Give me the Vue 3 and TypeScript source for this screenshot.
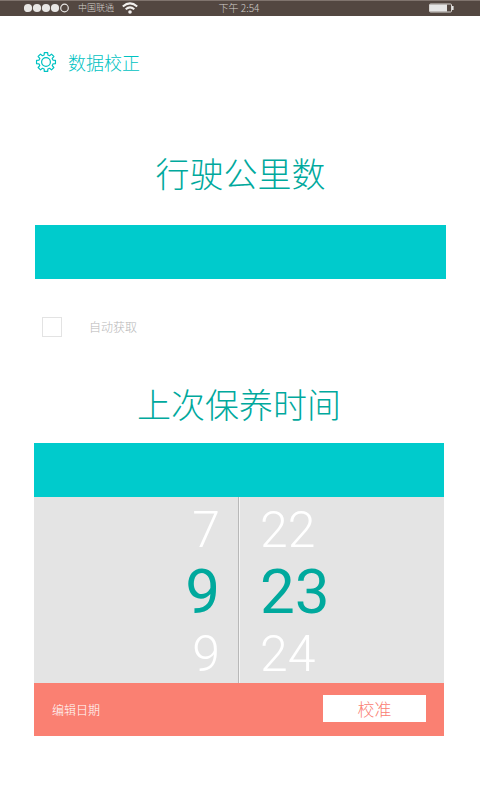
<script setup lang="ts">
import { ref } from 'vue'

interface PickerColumn {
  name: string
  side: 'left' | 'right'
  values: number[]
}

const mileage = ref<string>('')
const autoFetch = ref<boolean>(false)

const columns: PickerColumn[] = [
  { name: 'month', side: 'left', values: [7, 9, 9] },
  { name: 'day', side: 'right', values: [22, 23, 24] },
]
const activeRow = ref<Record<string, number>>({ month: 1, day: 1 })

function pick(column: PickerColumn, row: number): void {
  activeRow.value[column.name] = row
}

const teeth: number[] = [0, 45, 90, 135, 180, 225, 270, 315]
function gearPath(): string {
  const point = (radius: number, degrees: number): string => {
    const a = (degrees * Math.PI) / 180
    return `${(11 + radius * Math.cos(a)).toFixed(2)} ${(11 + radius * Math.sin(a)).toFixed(2)}`
  }
  return (
    teeth
      .map((t, i) => `${i ? 'L' : 'M'}${point(7.2, t - 15)}L${point(9.6, t - 10)}L${point(9.6, t + 10)}L${point(7.2, t + 15)}`)
      .join('') + 'Z'
  )
}
</script>

<template>
  <div class="screen">
    <div class="status">
      <div class="carrier">
        <svg width="46" height="10" viewBox="0 0 46 10" aria-hidden="true">
          <circle v-for="n in 4" :key="n" :cx="n * 9 - 5" cy="5" r="4.1" fill="#e8e6e4" />
          <circle cx="40.5" cy="5" r="3.8" fill="none" stroke="#e8e6e4" stroke-width="1.2" />
        </svg>
        <span class="operator">中国联通</span>
        <svg width="16" height="12" viewBox="0 0 16 12" aria-hidden="true" fill="none" stroke="#f2f0ee" stroke-width="2">
          <path d="M0.8 4.6Q8 -1.8 15.2 4.6" />
          <path d="M3.7 7.3Q8 3.5 12.3 7.3" />
          <circle cx="8" cy="10" r="1.8" fill="#f2f0ee" stroke="none" />
        </svg>
      </div>
      <span class="clock">下午 2:54</span>
      <svg class="battery" width="26" height="10" viewBox="0 0 26 10" aria-hidden="true">
        <rect x="1.5" y="1" width="22" height="8" rx="1" fill="none" stroke="#d8d5d2" />
        <rect x="2" y="1.5" width="17" height="7" fill="#e6e6e6" />
        <path d="M24 3h1.6v4H24z" fill="#e6e6e6" />
      </svg>
    </div>

    <header class="header">
      <svg width="22" height="22" viewBox="0 0 22 22" aria-hidden="true" fill="none" stroke="#00c2c2" stroke-width="1.2" stroke-linejoin="round">
        <path :d="gearPath()" />
        <circle cx="11" cy="11" r="4.4" />
      </svg>
      <h1>数据校正</h1>
    </header>

    <main>
      <section class="mileage">
        <h2><label for="mileage">行驶公里数</label></h2>
        <input id="mileage" v-model="mileage" class="bar" type="text" inputmode="numeric" />
        <label class="auto">
          <input v-model="autoFetch" type="checkbox" />
          <span>自动获取</span>
        </label>
      </section>

      <section class="service">
        <h2>上次保养时间</h2>
        <div class="card">
          <div class="bar"></div>
          <div class="picker">
            <div v-for="column in columns" :key="column.name" class="column" :class="column.side">
              <button
                v-for="(value, row) in column.values"
                :key="row"
                type="button"
                :class="{ active: activeRow[column.name] === row }"
                @click="pick(column, row)"
              >{{ value }}</button>
            </div>
          </div>
          <div class="actions">
            <span>编辑日期</span>
            <button type="button" class="calibrate">校准</button>
          </div>
        </div>
      </section>
    </main>
  </div>
</template>

<style>
body {
  background: #fff;
}
</style>

<style scoped>
.screen {
  min-height: 100vh;
  font-family: 'Noto Sans CJK SC', sans-serif;
  font-weight: 300;
  color: #00a99d;
}

.screen * {
  box-sizing: border-box;
}

.status {
  display: grid;
  grid-template-columns: 1fr auto 1fr;
  align-items: center;
  height: 16px;
  padding: 0 26px 1px 24px;
  border-top: 1px solid #80746e;
  background: #534741;
  color: #d2cecb;
  font-size: 9px;
  line-height: 12px;
}

.carrier {
  display: flex;
  align-items: center;
}

.operator {
  margin: 0 8px;
}

.clock {
  font-size: 10px;
}

.battery {
  justify-self: end;
}

.header {
  display: flex;
  align-items: center;
  gap: 11px;
  padding: 34px 35px 0;
  color: #00c2c2;
}

h1,
h2 {
  margin: 0;
  font-weight: 300;
}

h1 {
  font-size: 18px;
  line-height: 24px;
}

h2 {
  font-size: 34px;
  line-height: 50px;
  text-align: center;
}

.bar {
  display: block;
  width: 100%;
  height: 54px;
  padding: 0 18px;
  border: 0;
  border-radius: 0;
  outline: 0;
  background: #00cbcc;
  color: #fff;
  font: inherit;
  font-size: 24px;
}

.mileage {
  padding: 74px 34px 0 35px;
}

.mileage .bar {
  margin-top: 27px;
}

.auto {
  display: inline-flex;
  align-items: center;
  gap: 27px;
  margin: 38px 7px 0;
  color: #b8b8b8;
  font-size: 12px;
  line-height: 20px;
}

.auto input {
  appearance: none;
  width: 20px;
  height: 20px;
  margin: 0;
  border: 1px solid #e3e3e3;
  background: #fff;
}

.auto input:checked {
  background: #00cbcc;
}

.service {
  padding: 37px 36px 0 34px;
}

.service h2 {
  margin: 0 0 14px;
}

.picker {
  display: grid;
  grid-template-columns: 1fr 1fr;
  background: #e4e4e4;
}

.column {
  display: flex;
  flex-direction: column;
}

.column button {
  height: 62px;
  padding: 4px 20px 0;
  border: 0;
  background: none;
  color: #fff;
  font-family: Roboto, sans-serif;
  font-size: 50px;
  font-weight: 300;
  line-height: 58px;
}

.column .active {
  color: #00a99d;
  font-size: 62px;
  font-weight: 400;
}

.left {
  border-right: 1px solid #b8b8b8;
}

.right {
  border-left: 1px solid #f4f4f4;
}

.left button {
  padding-right: 18px;
  text-align: right;
}

.right button {
  text-align: left;
}

.actions {
  display: flex;
  align-items: center;
  justify-content: space-between;
  height: 53px;
  padding: 0 18px;
  background: #fa8072;
  color: #fff;
  font-size: 12px;
}

.calibrate {
  width: 103px;
  height: 27px;
  margin: 0 0 2px;
  padding: 0;
  border: 0;
  background: #fff;
  color: #fa8072;
  font: inherit;
  font-size: 17px;
  line-height: 27px;
}
</style>
